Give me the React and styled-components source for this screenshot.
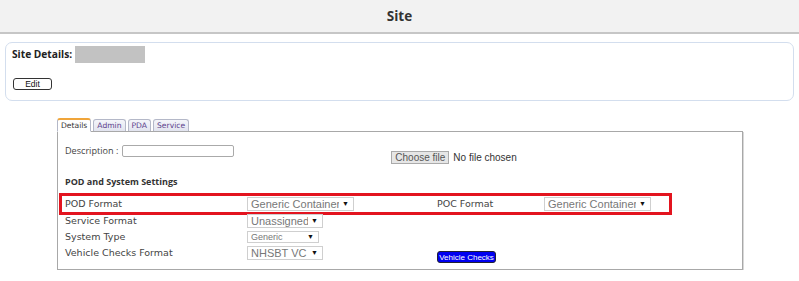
import React from 'react'
import styled, { createGlobalStyle } from 'styled-components'

const GlobalStyle = createGlobalStyle`
  body {
    margin: 0;
    background: #fff;
    font-family: "Open Sans", "Liberation Sans", sans-serif;
  }
`

const Header = styled.div({
  height: 32,
  background: '#f2f2f2',
  borderBottom: '2px solid #c6c6c6',
  display: 'flex',
  alignItems: 'center',
  justifyContent: 'center',
  fontSize: 13.5,
  fontWeight: 700,
  color: '#333'
})

const Card = styled.div({
  margin: '8px 5px 0',
  height: 57,
  border: '1px solid #d3deee',
  borderRadius: 7,
  padding: '0 6px',
  display: 'flex',
  flexDirection: 'column'
})

const CardTitle = styled.div({
  display: 'flex',
  alignItems: 'center',
  marginTop: 2,
  height: 18,
  fontSize: 10.2,
  fontWeight: 700,
  color: '#222'
})

const Redacted = styled.span({
  display: 'inline-block',
  width: 70,
  height: 17,
  background: '#c2c2c2',
  marginLeft: 3
})

const EditButton = styled.button({
  marginTop: 15,
  marginLeft: 1,
  width: 39,
  height: 12,
  padding: 0,
  border: '1px solid #333',
  borderRadius: 3,
  background: '#fff',
  fontFamily: '"Liberation Sans", Arial, sans-serif',
  fontSize: 8.5,
  lineHeight: '10px',
  color: '#111'
})

const TabsWrap = styled.div({
  margin: '16px 0 0 57px',
  width: 686
})

const TabStrip = styled.div({
  display: 'flex',
  gap: 2,
  height: 14,
  alignItems: 'flex-end'
})

const Tab = styled.div(({ $active }) => ({
  height: $active ? 14 : 12,
  padding: '0 3px',
  display: 'flex',
  alignItems: 'center',
  border: '1px solid #b4b8c8',
  borderTop: $active ? '2px solid #f0a53a' : '1px solid #b4b8c8',
  borderBottom: $active ? '1px solid #fff' : 'none',
  borderRadius: '3px 3px 0 0',
  background: $active ? '#fff' : 'linear-gradient(#f4f5fa, #e2e4ef)',
  fontFamily: '"DejaVu Sans", Verdana, sans-serif',
  fontSize: 7.6,
  color: $active ? '#333' : '#5b3f8c',
  marginBottom: $active ? -1 : 0,
  position: 'relative',
  boxSizing: 'border-box'
}))

const Panel = styled.div({
  height: 139,
  boxSizing: 'border-box',
  border: '1px solid #a8a8a8',
  boxShadow: '1px 1px 0 #d8d8d8',
  padding: '12px 7px 0'
})

const DescRow = styled.div({
  display: 'flex',
  alignItems: 'flex-start',
  height: 22
})

const DescLabel = styled.label({
  fontSize: 9.1,
  color: '#444',
  lineHeight: '13px',
  marginRight: 4
})

const TextInput = styled.span({
  display: 'inline-block',
  width: 110,
  height: 10,
  border: '1px solid #aaa',
  borderRadius: 2,
  marginTop: 1
})

const FileWrap = styled.div({
  display: 'flex',
  alignItems: 'center',
  marginLeft: 157,
  marginTop: 7,
  fontFamily: '"Liberation Sans", Arial, sans-serif',
  fontSize: 10,
  color: '#333'
})

const FileButton = styled.span({
  display: 'inline-flex',
  alignItems: 'center',
  height: 11,
  padding: '0 3px',
  background: '#e6e6e6',
  border: '1px solid #aaa',
  color: '#555',
  marginRight: 4
})

const Heading = styled.div({
  marginTop: 9,
  fontSize: 9,
  fontWeight: 700,
  color: '#333',
  lineHeight: '14px'
})

const Row = styled.div(({ $highlight }) => ({
  display: 'grid',
  gridTemplateColumns: '182px 190px 107px 1fr',
  gridTemplateRows: '16px',
  alignItems: 'center',
  justifyItems: 'start',
  height: 16,
  margin: $highlight ? '4px 63px -2px -6px' : '0',
  padding: $highlight ? '0 3px' : '0',
  border: $highlight ? '3px solid #e3141f' : 'none'
}))

const Label = styled.span({
  fontFamily: '"DejaVu Sans", Verdana, sans-serif',
  fontSize: 9.5,
  lineHeight: '12px',
  color: '#444'
})

const Select = styled.span(({ $w, $small }) => ({
  display: 'flex',
  alignItems: 'center',
  width: $w,
  height: $small ? 12 : 14,
  boxSizing: 'border-box',
  border: '1px solid #cfcfcf',
  padding: '0 4px 0 3px',
  fontFamily: '"Liberation Sans", Arial, sans-serif',
  fontSize: $small ? 9 : 11,
  lineHeight: '12px',
  color: '#777',
  background: '#fff',
  whiteSpace: 'nowrap',
  overflow: 'hidden'
}))

const SelectText = styled.span({
  flex: 1,
  overflow: 'hidden'
})

const Arrow = styled.span({
  fontSize: 7,
  color: '#111',
  marginLeft: 3
})

const BlueButton = styled.span({
  display: 'flex',
  alignItems: 'center',
  justifyContent: 'center',
  width: 59,
  height: 12,
  marginTop: 8,
  borderRadius: 3,
  background: '#0000f0',
  border: '1px solid #223',
  boxSizing: 'border-box',
  fontFamily: '"Liberation Sans", Arial, sans-serif',
  fontSize: 8,
  color: '#fff'
})

function Dropdown({ w, small, children }) {
  return (
    <Select $w={w} $small={small}>
      <SelectText>{children}</SelectText>
      <Arrow>▼</Arrow>
    </Select>
  )
}

export default function App() {
  return (
    <>
      <GlobalStyle />
      <Header>Site</Header>
      <Card>
        <CardTitle>
          Site Details:
          <Redacted />
        </CardTitle>
        <div>
          <EditButton>Edit</EditButton>
        </div>
      </Card>
      <TabsWrap>
        <TabStrip>
          <Tab $active>Details</Tab>
          <Tab>Admin</Tab>
          <Tab>PDA</Tab>
          <Tab>Service</Tab>
        </TabStrip>
        <Panel>
          <DescRow>
            <DescLabel>Description :</DescLabel>
            <TextInput />
            <FileWrap>
              <FileButton>Choose file</FileButton>
              No file chosen
            </FileWrap>
          </DescRow>
          <Heading>POD and System Settings</Heading>
          <Row $highlight>
            <Label>POD Format</Label>
            <Dropdown w={107}>Generic Container</Dropdown>
            <Label>POC Format</Label>
            <Dropdown w={107}>Generic Container</Dropdown>
          </Row>
          <Row>
            <Label>Service Format</Label>
            <Dropdown w={76}>Unassigned</Dropdown>
          </Row>
          <Row>
            <Label>System Type</Label>
            <Dropdown w={72} small>
              Generic
            </Dropdown>
          </Row>
          <Row>
            <Label>Vehicle Checks Format</Label>
            <Dropdown w={76}>NHSBT VC</Dropdown>
            <BlueButton>Vehicle Checks</BlueButton>
          </Row>
        </Panel>
      </TabsWrap>
    </>
  )
}
